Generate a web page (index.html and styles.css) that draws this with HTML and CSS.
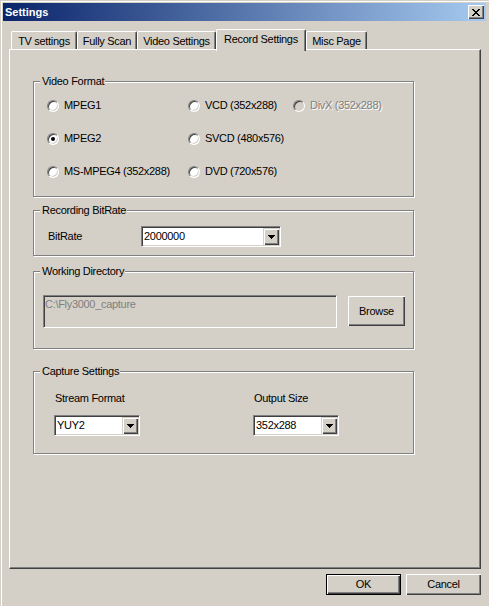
FILE: index.html
```html
<!DOCTYPE html>
<html lang="en">
<head>
  <meta charset="UTF-8">
  <meta name="viewport" content="width=device-width, initial-scale=1.0">
  <title>Settings</title>
  <link rel="stylesheet" href="styles.css">
</head>
<body>
  <div class="window">
    <div class="titlebar">
      <span class="title">Settings</span>
      <span class="close">
        <svg width="8" height="7" viewBox="0 0 8 7" shape-rendering="crispEdges">
          <path d="M0 0h2v1H0zM6 0h2v1H6zM1 1h2v1H1zM5 1h2v1H5zM2 2h4v1H2zM3 3h2v1H3zM2 4h4v1H2zM1 5h2v1H1zM5 5h2v1H5zM0 6h2v1H0zM6 6h2v1H6z" fill="#000"/>
        </svg>
      </span>
    </div>

    <div class="client">
      <div class="tabs">
        <div class="tab tab-tv">TV settings</div>
        <div class="tab tab-scan">Fully Scan</div>
        <div class="tab tab-video">Video Settings</div>
        <div class="tab tab-record selected">Record Settings</div>
        <div class="tab tab-misc">Misc Page</div>
      </div>

      <div class="panel">
        <div class="group group-format">
          <div class="group-title">Video Format</div>
          <div class="format-grid">
            <label class="radio"><span class="radio-mark"></span>MPEG1</label>
            <label class="radio"><span class="radio-mark"></span>VCD (352x288)</label>
            <label class="radio disabled"><span class="radio-mark"></span>DivX (352x288)</label>
            <label class="radio"><span class="radio-mark checked"></span>MPEG2</label>
            <label class="radio"><span class="radio-mark"></span>SVCD (480x576)</label>
            <span></span>
            <label class="radio"><span class="radio-mark"></span>MS-MPEG4 (352x288)</label>
            <label class="radio"><span class="radio-mark"></span>DVD (720x576)</label>
          </div>
        </div>

        <div class="group group-bitrate">
          <div class="group-title">Recording BitRate</div>
          <div class="bitrate-row">
            <span class="bitrate-label">BitRate</span>
            <div class="combo combo-wide">
              <span class="combo-value">2000000</span>
              <span class="combo-button">
                <svg width="7" height="4" viewBox="0 0 7 4" shape-rendering="crispEdges"><path d="M0 0h7v1H6v1H5v1H4v1H3V3H2V2H1V1H0z" fill="#000"/></svg>
              </span>
            </div>
          </div>
        </div>

        <div class="group group-dir">
          <div class="group-title">Working Directory</div>
          <div class="dir-row">
            <div class="dir-field">C:\Fly3000_capture</div>
            <div class="button browse">Browse</div>
          </div>
        </div>

        <div class="group group-capture">
          <div class="group-title">Capture Settings</div>
          <div class="capture-row">
            <div class="capture-col">
              <div class="capture-label">Stream Format</div>
              <div class="combo combo-small">
                <span class="combo-value">YUY2</span>
                <span class="combo-button">
                  <svg width="7" height="4" viewBox="0 0 7 4" shape-rendering="crispEdges"><path d="M0 0h7v1H6v1H5v1H4v1H3V3H2V2H1V1H0z" fill="#000"/></svg>
                </span>
              </div>
            </div>
            <div class="capture-col">
              <div class="capture-label">Output Size</div>
              <div class="combo combo-small">
                <span class="combo-value">352x288</span>
                <span class="combo-button">
                  <svg width="7" height="4" viewBox="0 0 7 4" shape-rendering="crispEdges"><path d="M0 0h7v1H6v1H5v1H4v1H3V3H2V2H1V1H0z" fill="#000"/></svg>
                </span>
              </div>
            </div>
          </div>
        </div>
      </div>

      <div class="buttons">
        <div class="button default">OK</div>
        <div class="button">Cancel</div>
      </div>
    </div>
  </div>
</body>
</html>
```

FILE: styles.css
```css
* {
  box-sizing: border-box;
}
body, html {
  margin: 0;
  background-color: #d4d0c8;
}
body {
  font-family: "Liberation Sans", Arial, sans-serif;
  font-size: 11px;
  letter-spacing: -0.3px;
  line-height: 13px;
  color: #000;
}
.window {
  width: 489px;
  height: 606px;
  padding: 3px;
  box-shadow: inset 1px 1px 0 #d4d0c8, inset 2px 2px 0 #fff;
}

/* title bar */
.titlebar {
  height: 18px;
  display: flex;
  align-items: center;
  justify-content: space-between;
  padding: 0 2px;
  background: linear-gradient(to right, #0a246a, #a6caf0);
}
.title {
  color: #fff;
  font-weight: bold;
  letter-spacing: 0;
  padding-left: 0px;
}
.close {
  width: 16px;
  height: 14px;
  display: flex;
  align-items: center;
  justify-content: center;
  background-color: #d4d0c8;
  box-shadow: inset 1px 1px 0 #fff, inset -1px -1px 0 #404040, inset -2px -2px 0 #808080;
}

.client {
  padding: 8px 5px 0 6px;
}

/* tabs */
.tabs {
  display: flex;
  align-items: flex-end;
  height: 20px;
  padding-left: 2px;
}
.tab {
  height: 18px;
  padding-top: 3px;
  text-align: center;
  white-space: nowrap;
  background-color: #d4d0c8;
  border-top: 1px solid #fff;
  border-left: 1px solid #fff;
  border-right: 1px solid #404040;
  border-radius: 2px 2px 0 0;
  box-shadow: inset -1px 0 0 #808080;
}
.tab-tv { width: 66px; }
.tab-scan { width: 60px; }
.tab-video { width: 79px; }
.tab-record { width: 90px; }
.tab-misc { width: 61px; }
.tab.selected {
  height: 22px;
  margin-bottom: -2px;
  position: relative;
  z-index: 1;
}

/* page */
.panel {
  width: 472px;
  height: 520px;
  padding: 31px 0 0 23px;
  border-top: 1px solid #fff;
  border-left: 1px solid #fff;
  border-right: 1px solid #404040;
  border-bottom: 1px solid #404040;
  box-shadow: inset -1px -1px 0 #808080;
}

.group {
  width: 381px;
  border: 1px solid #808080;
  box-shadow: inset 1px 1px 0 #fff, 1px 1px 0 #fff;
}
.group-title {
  width: fit-content;
  margin: -7px 0 0 6px;
  padding: 0 1px 0 2px;
  background-color: #d4d0c8;
}
.group-format { height: 116px; }
.group-bitrate { height: 46px; margin-top: 13px; }
.group-dir { height: 78px; margin-top: 15px; }
.group-capture { height: 83px; margin-top: 22px; }

/* radios */
.format-grid {
  display: grid;
  grid-template-columns: 141px 105px auto;
  grid-auto-rows: 33px;
  align-items: center;
  padding: 1px 0 0 13px;
}
.radio {
  display: flex;
  align-items: center;
  gap: 5px;
  white-space: nowrap;
}
.radio-mark {
  width: 12px;
  height: 12px;
  border-radius: 50%;
  background-color: #fff;
  border: 1px solid;
  border-color: #808080 #fff #fff #808080;
  box-shadow: inset 1px 1px 0 #404040, inset -1px -1px 0 #d4d0c8;
  display: flex;
  align-items: center;
  justify-content: center;
}
.radio-mark.checked::after {
  content: "";
  width: 4px;
  height: 4px;
  border-radius: 50%;
  background-color: #000;
}
.radio.disabled {
  color: #808080;
  text-shadow: 1px 1px 0 #fff;
}
.radio.disabled .radio-mark {
  background-color: #d4d0c8;
}

/* combo boxes */
.combo {
  display: flex;
  height: 21px;
  padding: 1px;
  background-color: #fff;
  border: 1px solid;
  border-color: #808080 #fff #fff #808080;
  box-shadow: inset 1px 1px 0 #404040, inset -1px -1px 0 #d4d0c8;
}
.combo-wide { width: 140px; }
.combo-small { width: 86px; }
.combo-value {
  flex: 1;
  padding-left: 1px;
  line-height: 17px;
}
.combo-button {
  width: 16px;
  height: 17px;
  display: flex;
  align-items: center;
  justify-content: center;
  background-color: #d4d0c8;
  box-shadow: inset 1px 1px 0 #d4d0c8, inset 2px 2px 0 #fff, inset -1px -1px 0 #404040, inset -2px -2px 0 #808080;
}

.bitrate-row {
  display: flex;
  align-items: center;
  margin-top: 9px;
  padding-left: 14px;
}
.bitrate-label {
  width: 93px;
}

.dir-row {
  display: flex;
  align-items: flex-start;
  gap: 11px;
  margin-top: 17px;
  padding-left: 9px;
}
.dir-field {
  width: 294px;
  height: 33px;
  padding: 2px 1px;
  color: #808080;
  background-color: #d4d0c8;
  border: 1px solid;
  border-color: #808080 #fff #fff #808080;
  box-shadow: inset 1px 1px 0 #404040, inset -1px -1px 0 #d4d0c8;
}

.capture-row {
  display: grid;
  grid-template-columns: 199px 199px;
  margin-top: 14px;
  padding-left: 20px;
}
.capture-label {
  padding-left: 1px;
  margin-bottom: 10px;
}

/* push buttons */
.button {
  width: 75px;
  height: 21px;
  display: flex;
  align-items: center;
  justify-content: center;
  background-color: #d4d0c8;
  box-shadow: inset 1px 1px 0 #fff, inset -1px -1px 0 #404040, inset -2px -2px 0 #808080;
}
.button.default {
  border: 1px solid #000;
}
.browse {
  width: 57px;
  height: 30px;
  margin-top: 1px;
}
.buttons {
  display: flex;
  justify-content: flex-end;
  gap: 5px;
  margin-top: 5px;
}
```
